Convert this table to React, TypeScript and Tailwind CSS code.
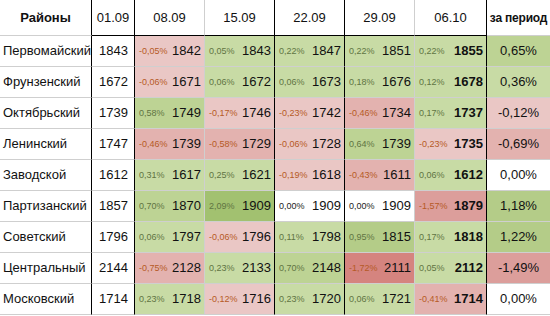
import React from "react";

type Cell = { p: string; v: number; bg: string };

type Row = {
  name: string;
  start: number;
  cells: Cell[];
  total: string;
  totalBg: string;
};

// цвета заливки (условное форматирование)
const G1 = "bg-[#c8dba5]";
const G2 = "bg-[#bdd394]";
const G3 = "bg-[#b4cc88]";
const G4 = "bg-[#a2c170]";
const R1 = "bg-[#eac7c5]";
const R2 = "bg-[#e3b2af]";
const R3 = "bg-[#dc9e9b]";
const R4 = "bg-[#d5847f]";
const W = "bg-white";

const rows: Row[] = [
  {
    name: "Первомайский",
    start: 1843,
    cells: [
      { p: "-0,05%", v: 1842, bg: R1 },
      { p: "0,05%", v: 1843, bg: G1 },
      { p: "0,22%", v: 1847, bg: G1 },
      { p: "0,22%", v: 1851, bg: G1 },
      { p: "0,22%", v: 1855, bg: G1 },
    ],
    total: "0,65%",
    totalBg: G2,
  },
  {
    name: "Фрунзенский",
    start: 1672,
    cells: [
      { p: "-0,06%", v: 1671, bg: R1 },
      { p: "0,06%", v: 1672, bg: G1 },
      { p: "0,06%", v: 1673, bg: G1 },
      { p: "0,18%", v: 1676, bg: G1 },
      { p: "0,12%", v: 1678, bg: G1 },
    ],
    total: "0,36%",
    totalBg: G1,
  },
  {
    name: "Октябрьский",
    start: 1739,
    cells: [
      { p: "0,58%", v: 1749, bg: G2 },
      { p: "-0,17%", v: 1746, bg: R1 },
      { p: "-0,23%", v: 1742, bg: R1 },
      { p: "-0,46%", v: 1734, bg: R2 },
      { p: "0,17%", v: 1737, bg: G1 },
    ],
    total: "-0,12%",
    totalBg: R1,
  },
  {
    name: "Ленинский",
    start: 1747,
    cells: [
      { p: "-0,46%", v: 1739, bg: R2 },
      { p: "-0,58%", v: 1729, bg: R2 },
      { p: "-0,06%", v: 1728, bg: R1 },
      { p: "0,64%", v: 1739, bg: G2 },
      { p: "-0,23%", v: 1735, bg: R1 },
    ],
    total: "-0,69%",
    totalBg: R2,
  },
  {
    name: "Заводской",
    start: 1612,
    cells: [
      { p: "0,31%", v: 1617, bg: G1 },
      { p: "0,25%", v: 1621, bg: G1 },
      { p: "-0,19%", v: 1618, bg: R1 },
      { p: "-0,43%", v: 1611, bg: R2 },
      { p: "0,06%", v: 1612, bg: G1 },
    ],
    total: "0,00%",
    totalBg: W,
  },
  {
    name: "Партизанский",
    start: 1857,
    cells: [
      { p: "0,70%", v: 1870, bg: G2 },
      { p: "2,09%", v: 1909, bg: G4 },
      { p: "0,00%", v: 1909, bg: W },
      { p: "0,00%", v: 1909, bg: W },
      { p: "-1,57%", v: 1879, bg: R3 },
    ],
    total: "1,18%",
    totalBg: G3,
  },
  {
    name: "Советский",
    start: 1796,
    cells: [
      { p: "0,06%", v: 1797, bg: G1 },
      { p: "-0,06%", v: 1796, bg: R1 },
      { p: "0,11%", v: 1798, bg: G1 },
      { p: "0,95%", v: 1815, bg: G3 },
      { p: "0,17%", v: 1818, bg: G1 },
    ],
    total: "1,22%",
    totalBg: G3,
  },
  {
    name: "Центральный",
    start: 2144,
    cells: [
      { p: "-0,75%", v: 2128, bg: R2 },
      { p: "0,23%", v: 2133, bg: G1 },
      { p: "0,70%", v: 2148, bg: G2 },
      { p: "-1,72%", v: 2111, bg: R4 },
      { p: "0,05%", v: 2112, bg: G1 },
    ],
    total: "-1,49%",
    totalBg: R3,
  },
  {
    name: "Московский",
    start: 1714,
    cells: [
      { p: "0,23%", v: 1718, bg: G1 },
      { p: "-0,12%", v: 1716, bg: R1 },
      { p: "0,23%", v: 1720, bg: G1 },
      { p: "0,06%", v: 1721, bg: G1 },
      { p: "-0,41%", v: 1714, bg: R2 },
    ],
    total: "0,00%",
    totalBg: W,
  },
];

const dates = ["08.09", "15.09", "22.09", "29.09", "06.10"];

// правая граница колонок недель: чёрная / серая
const weekBorder = [
  "border-r-[#cfcfcf]",
  "border-r-black",
  "border-r-black",
  "border-r-[#cfcfcf]",
  "border-r-black",
];

function pctColor(p: string) {
  if (p === "0,00%") return "text-[#222]";
  return p.startsWith("-") ? "text-[#b65a26]" : "text-[#5f7442]";
}

export default function App() {
  return (
    <div
      className="w-[550px] h-[316px] bg-white text-[#111] overflow-hidden"
      style={{ fontFamily: '"Liberation Sans", Arial, sans-serif' }}
    >
      <div className="grid grid-cols-[92px_43px_70px_70px_70px_70px_72px_63px] grid-rows-[36px_repeat(9,31px)]">
        {/* Header */}
        <div className="flex items-center justify-center border-r border-b border-r-black border-b-[#cfcfcf] text-[13px] font-bold">
          Районы
        </div>
        <div className="flex items-center justify-center border-r border-b border-black text-[13px]">
          01.09
        </div>
        {dates.map((d, i) => (
          <div
            key={d}
            className={`flex items-center justify-center border-r border-b border-b-black text-[13px] ${weekBorder[i]}`}
          >
            {d}
          </div>
        ))}
        <div className="flex items-center justify-center border-b border-b-[#cfcfcf] text-[12px] font-bold tracking-[-0.2px] whitespace-nowrap">
          за период
        </div>

        {/* Body */}
        {rows.map((r) => (
          <React.Fragment key={r.name}>
            <div className="flex items-center pl-[3px] border-r border-b border-r-black border-b-[#cfcfcf] text-[13px] whitespace-nowrap">
              {r.name}
            </div>
            <div className="flex items-center justify-center pl-[1px] border-r border-b border-r-black border-b-[#cfcfcf] text-[13px]">
              {r.start}
            </div>
            {r.cells.map((c, i) => (
              <div
                key={i}
                className={`flex items-center justify-between pl-[4px] pr-[3px] border-r border-b border-b-[#cfcfcf] ${weekBorder[i]} ${c.bg}`}
              >
                <span className={`text-[9px] pt-[1px] ${pctColor(c.p)}`}>{c.p}</span>
                <span className={`text-[13px] ${i === 4 ? "font-bold" : ""}`}>{c.v}</span>
              </div>
            ))}
            <div
              className={`flex items-center justify-center border-b border-b-[#cfcfcf] text-[13px] ${r.totalBg}`}
            >
              {r.total}
            </div>
          </React.Fragment>
        ))}
      </div>
    </div>
  );
}
